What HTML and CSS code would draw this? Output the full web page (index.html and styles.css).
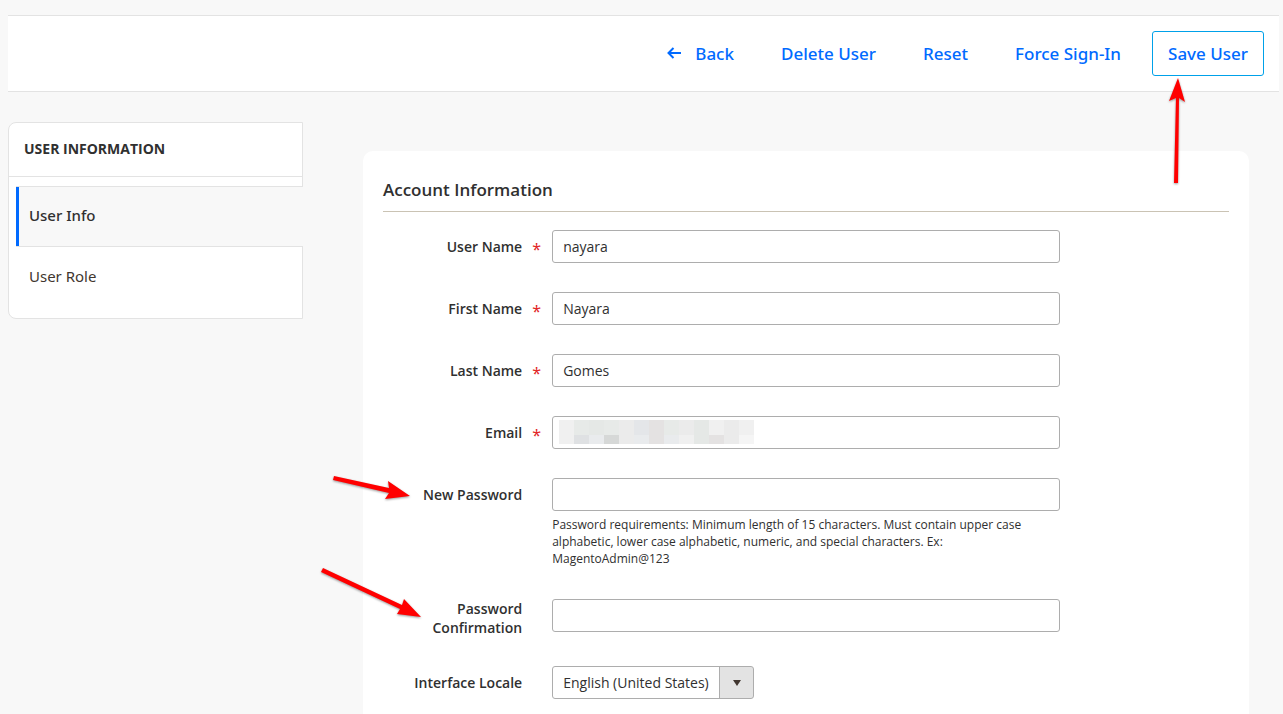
FILE: index.html
```
<!DOCTYPE html>
<html lang="en">
<head>
    <meta charset="UTF-8">
    <meta name="viewport" content="width=device-width, initial-scale=1.0">
    <title>Edit User</title>
    <link rel="stylesheet" href="styles.css">
</head>
<body>
    <header class="toolbar">
        <button type="button" class="action back">
            <svg class="back-icon" viewBox="0 0 14 12" aria-hidden="true"><path d="M14 6H1.5M6.5 1L1.5 6l5 5"/></svg>
            Back
        </button>
        <button type="button" class="action">Delete User</button>
        <button type="button" class="action">Reset</button>
        <button type="button" class="action">Force Sign-In</button>
        <div class="save">
            <button type="submit" form="user-form" class="action primary">Save User</button>
            <svg class="arrow arrow-save" viewBox="0 0 20 108" aria-hidden="true">
                <path d="M10 1L17 25L11 21L10 106H6L8 21L1 24Z"/>
            </svg>
        </div>
    </header>

    <main class="columns">
        <nav class="tabs">
            <h2 class="tabs-title">User Information</h2>
            <ul class="tabs-list">
                <li class="tab active"><a href="#user-info">User Info</a></li>
                <li class="tab"><a href="#user-role">User Role</a></li>
            </ul>
        </nav>

        <form class="card" id="user-form">
            <h1 class="legend">Account Information</h1>

            <div class="field required">
                <label for="username">User Name</label>
                <div class="control"><input type="text" id="username" value="nayara"></div>
            </div>
            <div class="field required">
                <label for="firstname">First Name</label>
                <div class="control"><input type="text" id="firstname" value="Nayara"></div>
            </div>
            <div class="field required">
                <label for="lastname">Last Name</label>
                <div class="control"><input type="text" id="lastname" value="Gomes"></div>
            </div>
            <div class="field required">
                <label for="email">Email</label>
                <div class="control">
                    <input type="email" id="email">
                    <svg class="redacted" viewBox="0 0 195 24" shape-rendering="crispEdges" aria-hidden="true">
                        <path fill="#f0f0f0" d="M0 0h15v24H0zM120 15h15v9h-15zM150 0h15v15h-15zM180 0h15v15h-15z"/>
                        <path fill="#e7eae8" d="M15 0h15v15H15zM45 0h15v15H45zM105 0h15v15h-15z"/>
                        <path fill="#e5e8e6" d="M30 0h15v15H30zM135 0h15v24h-15z"/>
                        <path fill="#ebebeb" d="M60 0h15v15H60zM120 0h15v15h-15zM165 0h15v24h-15zM60 15h15v9H60z"/>
                        <path fill="#e4e6e9" d="M75 0h15v15H75z"/>
                        <path fill="#e9ebed" d="M30 15h15v9H30zM75 15h15v9H75zM105 15h15v9h-15z"/>
                        <path fill="#e4e2e2" d="M90 0h15v24H90zM150 15h15v9h-15z"/>
                        <path fill="#dfe1e3" d="M15 15h15v9H15z"/>
                        <path fill="#d6d8d7" d="M45 15h15v9H45z"/>
                        <path fill="#f5f5f5" d="M180 15h15v9h-15z"/>
                    </svg>
                </div>
            </div>
            <div class="field">
                <label for="password">New Password</label>
                <div class="control">
                    <input type="password" id="password" aria-describedby="password-note">
                    <p class="note" id="password-note">Password requirements: Minimum length of 15 characters. Must contain upper case alphabetic, lower case alphabetic, numeric, and special characters. Ex: MagentoAdmin@123</p>
                </div>
                <svg class="arrow arrow-password" viewBox="0 0 80 26" aria-hidden="true">
                    <path d="M2 0L57 12L56 5L78 20L53 23L57 17L1 4Z"/>
                </svg>
            </div>
            <div class="field two-line">
                <label for="confirmation">Password Confirmation</label>
                <div class="control"><input type="password" id="confirmation"></div>
                <svg class="arrow arrow-confirm" viewBox="0 0 102 54" aria-hidden="true">
                    <path d="M3 1L82 38L84 32L101 50L77 47L80 42L1 5Z"/>
                </svg>
            </div>
            <div class="field">
                <label for="locale">Interface Locale</label>
                <div class="control">
                    <div class="select">
                        <select id="locale">
                            <option>English (United States)</option>
                        </select>
                    </div>
                </div>
            </div>
        </form>
    </main>
</body>
</html>
```
FILE: styles.css
```
* {
    box-sizing: border-box;
}

body {
    display: flex;
    flex-direction: column;
    min-height: 100vh;
    margin: 0;
    padding: 15px 4px 0 8px;
    background: #f8f8f8;
    color: #303030;
    font-family: "Open Sans", sans-serif;
    font-size: 14px;
}

button, input, select {
    font: inherit;
    color: inherit;
}

/* Toolbar */
.toolbar {
    display: flex;
    justify-content: flex-end;
    align-items: center;
    padding: 15px;
    background: #fff;
    border-top: 1px solid #e3e3e3;
    border-bottom: 1px solid #e3e3e3;
}

.action {
    display: flex;
    align-items: center;
    height: 45px;
    padding: 0 16px 1px;
    margin-right: 15px;
    background: none;
    border: 0;
    border-radius: 3px;
    color: #006aff;
    font-family: "Noto Sans", sans-serif;
    font-size: 17px;
    font-weight: 500;
    cursor: pointer;
}

.back-icon {
    width: 14px;
    height: 12px;
    margin-right: 14px;
    fill: none;
    stroke: #006aff;
    stroke-width: 2;
}

.save {
    position: relative;
}

.primary {
    padding: 0 15px 1px;
    margin-right: 0;
    border: 1px solid #00a1e9;
}

/* Columns */
.columns {
    display: flex;
    flex: 1;
    align-items: flex-start;
    gap: 60px;
    padding: 30px 30px 0 0;
}

.tabs {
    flex: 0 0 295px;
    padding-bottom: 11px;
    background: #fff;
    border: 1px solid #e3e3e3;
    border-radius: 8px 0 0 8px;
}

.tabs-title {
    margin: 0;
    padding: 16px 15px 17px;
    border-bottom: 1px solid #e3e3e3;
    font-size: 14px;
    font-weight: 700;
    line-height: 20px;
    text-transform: uppercase;
}

.tabs-list {
    margin: 9px 0 0;
    padding: 0;
    list-style: none;
}

.tab a {
    display: block;
    margin-left: 7px;
    padding: 19px 13px 21px;
    color: #41362f;
    font-family: "Noto Sans", sans-serif;
    font-size: 15px;
    line-height: 20px;
    text-decoration: none;
}

/* the open tab runs over the right border of the box */
.tab.active a {
    margin-right: -1px;
    padding: 18px 13px 21px;
    background: #f8f8f8;
    border: solid #e3e3e3;
    border-width: 1px 0;
    box-shadow: inset 3px 0 #006aff;
    color: #303030;
    font-weight: 500;
}

.card {
    flex: 1;
    align-self: stretch;
    margin-top: 29px;
    padding: 27px 20px 15px;
    background: #fff;
    border-radius: 10px 10px 0 0;
}

.legend {
    margin: 0 0 18px;
    padding-bottom: 9px;
    border-bottom: 1px solid #cac3b4;
    font-size: 17px;
    font-weight: 600;
    line-height: 24px;
}

/* Fields */
.field {
    position: relative;
    display: grid;
    grid-template-columns: 20% 60%;
    margin-bottom: 29px;
}

.field:last-child {
    margin-bottom: 0;
}

.field label {
    position: relative;
    padding: 7px 30px 0 0;
    font-weight: 600;
    line-height: 19px;
    text-align: right;
}

.two-line label {
    padding-top: 0;
}

.required label::after {
    content: "*";
    position: absolute;
    right: 11px;
    top: 10px;
    color: #e22626;
    font-family: "Noto Sans", sans-serif;
    font-weight: 400;
    font-size: 16px;
}

.control {
    position: relative;
}

.control input, .control select {
    display: block;
    width: 100%;
    height: 33px;
    padding: 0 10px;
    background: #fff;
    border: 1px solid #adadad;
    border-radius: 3px;
}

.redacted {
    position: absolute;
    left: 7px;
    top: 4px;
    width: 195px;
    height: 24px;
}

.note {
    margin: 5px 0 3px;
    font-size: 12px;
    line-height: 17px;
}

.select {
    position: relative;
    width: fit-content;
}

.control select {
    padding: 0 44px 0 10px;
    appearance: none;
    background: linear-gradient(to left, #e3e3e3 33px, #adadad 33px, #adadad 34px, #fff 34px);
}

.select::after {
    content: "";
    position: absolute;
    right: 13px;
    top: 14px;
    border: solid transparent;
    border-width: 6px 4px 0;
    border-top-color: #41362f;
}

/* Red pointer arrows */
.arrow {
    position: absolute;
    fill: #f00;
    filter: drop-shadow(0 1px 1px rgba(0, 0, 0, 0.4));
    pointer-events: none;
}

.arrow-save {
    left: 16px;
    top: 46px;
    width: 20px;
    height: 108px;
}

.arrow-password {
    left: -51px;
    top: -2px;
    width: 80px;
    height: 26px;
}

.arrow-confirm {
    left: -63px;
    top: -32px;
    width: 102px;
    height: 54px;
}
```
